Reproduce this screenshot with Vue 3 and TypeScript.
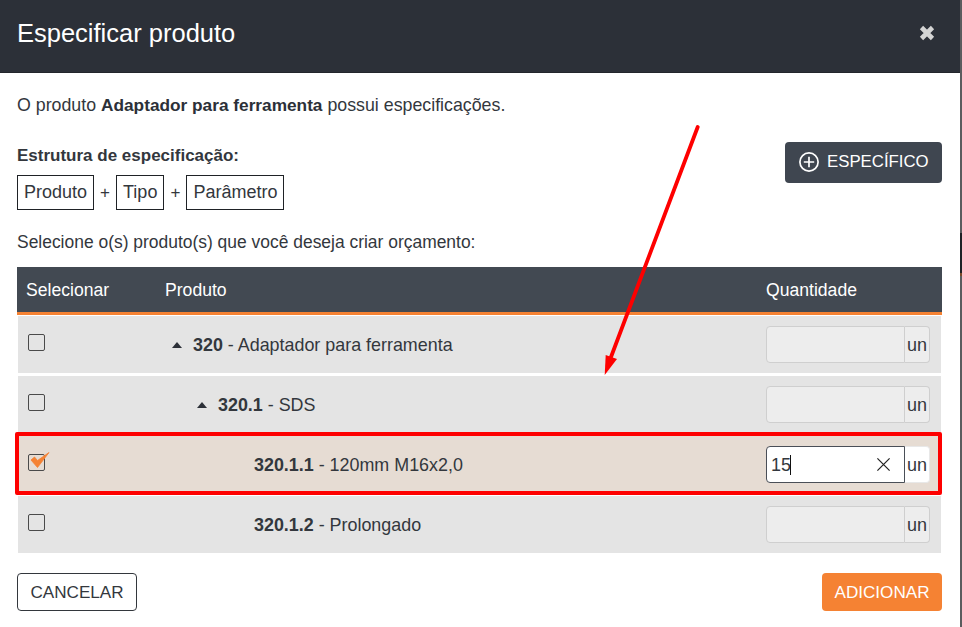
<script setup lang="ts">
interface Row {
  code: string
  name: string
  level: number
  caret: boolean
  selected: boolean
  value: string
}
const rows: Row[] = [
  { code: '320', name: 'Adaptador para ferramenta', level: 0, caret: true, selected: false, value: '' },
  { code: '320.1', name: 'SDS', level: 1, caret: true, selected: false, value: '' },
  { code: '320.1.1', name: '120mm M16x2,0', level: 2, caret: false, selected: true, value: '15' },
  { code: '320.1.2', name: 'Prolongado', level: 2, caret: false, selected: false, value: '' }
]
</script>

<template>
  <div class="screen">
    <div class="modal">
      <header class="head">
        <h1>Especificar produto</h1>
        <svg class="close" width="16" height="16" viewBox="0 0 16 16"><path d="M2.5 2.5 L13.5 13.5 M13.5 2.5 L2.5 13.5" stroke="#d4d4d4" stroke-width="4.6" /></svg>
      </header>
      <main class="body">
        <p class="intro">O produto <b>Adaptador para ferramenta</b> possui especificações.</p>
        <div class="spec-row">
          <div>
            <div class="spec-title">Estrutura de especificação:</div>
            <div class="chips">
              <span class="chip">Produto</span><span class="plus">+</span>
              <span class="chip">Tipo</span><span class="plus">+</span>
              <span class="chip">Parâmetro</span>
            </div>
          </div>
          <button class="btn-spec">
            <svg width="20" height="20" viewBox="0 0 20 20" fill="none" stroke="#fff"><circle cx="10" cy="10" r="9.1" stroke-width="1.7" /><path d="M10 4.8 V15.2 M4.8 10 H15.2" stroke-width="1.7" /></svg>
            ESPECÍFICO
          </button>
        </div>
        <p class="select-label">Selecione o(s) produto(s) que você deseja criar orçamento:</p>
        <div class="table">
          <div class="thead">
            <span class="c-sel">Selecionar</span>
            <span class="c-prod">Produto</span>
            <span class="c-qty">Quantidade</span>
          </div>
          <div v-for="r in rows" :key="r.code" class="row" :class="{ selected: r.selected }">
            <div class="c-sel">
              <span class="box">
                <svg v-if="r.selected" class="tick" width="22" height="18" viewBox="0 0 22 18"><path d="M1 8 L4.5 5 L7.5 8.5 L19 0.5 L7.5 15.5 Z" fill="#f58233" stroke="#f58233" stroke-width="0.8" stroke-linejoin="round" /></svg>
              </span>
            </div>
            <div class="c-prod name" :class="'lvl' + r.level">
              <span v-if="r.caret" class="caret"></span>
              <span><b>{{ r.code }}</b> - {{ r.name }}</span>
            </div>
            <div class="c-qty">
              <div class="qty">
                <div class="field">
                  <span v-if="r.value" class="val">{{ r.value }}<i class="cursor"></i></span>
                  <svg v-if="r.value" class="clear" width="16" height="16" viewBox="0 0 16 16"><path d="M1.5 1.5 L14.5 14.5 M14.5 1.5 L1.5 14.5" stroke="#222" stroke-width="1.3" fill="none" /></svg>
                </div>
                <span class="unit">un</span>
              </div>
            </div>
          </div>
          <div class="highlight"></div>
        </div>
        <footer class="foot">
          <button class="btn-cancel">CANCELAR</button>
          <button class="btn-add">ADICIONAR</button>
        </footer>
        <svg class="arrow" width="110" height="265" viewBox="0 0 110 265">
          <path d="M97.7 3 L11 233" stroke="#fe0000" stroke-width="3.8" stroke-linecap="round" fill="none" />
          <path d="M4.7 251 L5.7 231 L17 235 Z" fill="#fe0000" />
        </svg>
      </main>
    </div>
  </div>
</template>

<style>
html, body { margin: 0; background: #fff; }
</style>

<style scoped>
.screen {
  width: 962px;
  height: 627px;
  overflow: hidden;
  background: linear-gradient(#5a5c5e 0 233px, #1e2226 233px 273px, #7a4a2a 273px 276px, #5a5c5e 276px);
  font-family: "Liberation Sans", Arial, sans-serif;
  color: #33373d;
  font-size: 17.45px;
}
.modal { width: 960px; height: 627px; background: #fff; display: flex; flex-direction: column; }
.head {
  height: 73px;
  box-sizing: border-box;
  background: #2c3038;
  border-bottom: 1px solid #23262c;
  padding: 0 25px 6px 17px;
  display: flex;
  align-items: center;
  justify-content: space-between;
  flex: none;
}
h1 { margin: 0; font-size: 25.5px; font-weight: 400; color: #fff; line-height: 30px; }
.body { position: relative; flex: 1; padding: 0 18px 0 17px; }
.intro { margin: 23px 0 0; line-height: 18px; font-size: 17.8px; }
.intro b { color: #2c3038; font-size: 17.25px; }
.spec-row { display: flex; justify-content: space-between; align-items: flex-start; height: 104px; margin-top: 19px; }
.spec-title { font-weight: 700; line-height: 18px; margin-top: 14px; font-size: 17px; }
.chips { display: flex; align-items: center; margin-top: 10px; }
.chip { border: 1px solid #1f2226; line-height: 33px; padding: 0 6px; box-sizing: border-box; height: 35px; font-size: 18px; }
.plus { width: 22px; text-align: center; font-size: 17px; }
.btn-spec {
  margin-top: 9px;
  width: 157px;
  height: 41px;
  background: #3f4650;
  border: 0;
  border-radius: 4px;
  color: #fff;
  font: 16.8px "Liberation Sans", Arial, sans-serif;
  display: flex;
  align-items: center;
  gap: 8px;
  padding: 0 0 2px 14px;
  box-sizing: border-box;
}
.select-label { margin: -4px 0 0; line-height: 18px; }
.table { position: relative; margin-top: 16px; width: 925px; }
.thead {
  height: 48px;
  box-sizing: border-box;
  background: #424952;
  border-bottom: 3px solid #f58233;
  color: #fff;
  display: flex;
  align-items: center;
  font-size: 17.6px;
}
.thead span { line-height: 18px; }
.c-sel { width: 148px; padding-left: 9px; box-sizing: border-box; flex: none; }
.c-prod { flex: 1; }
.c-qty { width: 176px; flex: none; }
.row {
  height: 57px;
  margin: 1px 1px 3px;
  background: #e4e4e4;
  display: flex;
  align-items: center;
}
.row + .row { margin-top: 0; }
.row .c-sel { width: 147px; padding-left: 10px; align-self: flex-start; padding-top: 18px; }
.row.selected { background: #e6dcd3; }
.box {
  display: block;
  position: relative;
  width: 17px;
  height: 17px;
  box-sizing: border-box;
  border: 1px solid #4a4a4a;
  border-radius: 2px;
}
.tick { position: absolute; left: 1px; top: -3px; }
.name { display: flex; align-items: center; padding-top: 1px; font-size: 17.9px; }
.name b { font-weight: 700; color: #33373d; }
.lvl0 { padding-left: 7px; }
.lvl1 { padding-left: 32px; }
.lvl2 { padding-left: 89px; }
.caret {
  width: 0;
  height: 0;
  border-left: 5.5px solid transparent;
  border-right: 5.5px solid transparent;
  border-bottom: 6px solid #2c3038;
  margin-right: 11px;
}
.row .c-qty { width: 175px; align-self: flex-start; padding-top: 10px; }
.qty {
  width: 164px;
  height: 37px;
  display: flex;
  box-sizing: border-box;
}
.field {
  flex: 1;
  position: relative;
  box-sizing: border-box;
  border: 1px solid #cfcfcf;
  border-radius: 4px 0 0 4px;
  background: #ededed;
  display: flex;
  align-items: center;
  justify-content: space-between;
}
.unit {
  width: 25px;
  box-sizing: border-box;
  border: 1px solid #cfcfcf;
  border-left: 0;
  border-radius: 0 4px 4px 0;
  background: #ededed;
  text-align: center;
  line-height: 36px;
  font-size: 18px;
}
.selected .field { background: #fff; border-color: #4a4f57; }
.selected .unit { background: #fff; border-color: #e8e8e8; }
.val { padding: 1px 0 0 4px; display: flex; align-items: center; font-size: 18px; }
.cursor { display: block; width: 1px; height: 20px; background: #111; margin-left: -1px; }
.clear { margin-right: 13px; width: 15px; height: 15px; }
.highlight {
  position: absolute;
  left: -2px;
  top: 165px;
  width: 927px;
  height: 63px;
  box-sizing: border-box;
  border: 4px solid #fe0000;
  border-radius: 2px;
  pointer-events: none;
}
.foot { display: flex; justify-content: space-between; margin-top: 20px; }
.btn-cancel, .btn-add {
  height: 38px;
  box-sizing: border-box;
  border-radius: 4px;
  font: 17.1px "Liberation Sans", Arial, sans-serif;
  padding: 1px 0 0;
}
.btn-cancel { width: 120px; background: #fff; color: #33373d; border: 1px solid #33373d; }
.btn-add { width: 120px; background: #f58233; color: #fff; border: 0; }
.arrow { position: absolute; left: 600px; top: 51px; pointer-events: none; }
</style>
